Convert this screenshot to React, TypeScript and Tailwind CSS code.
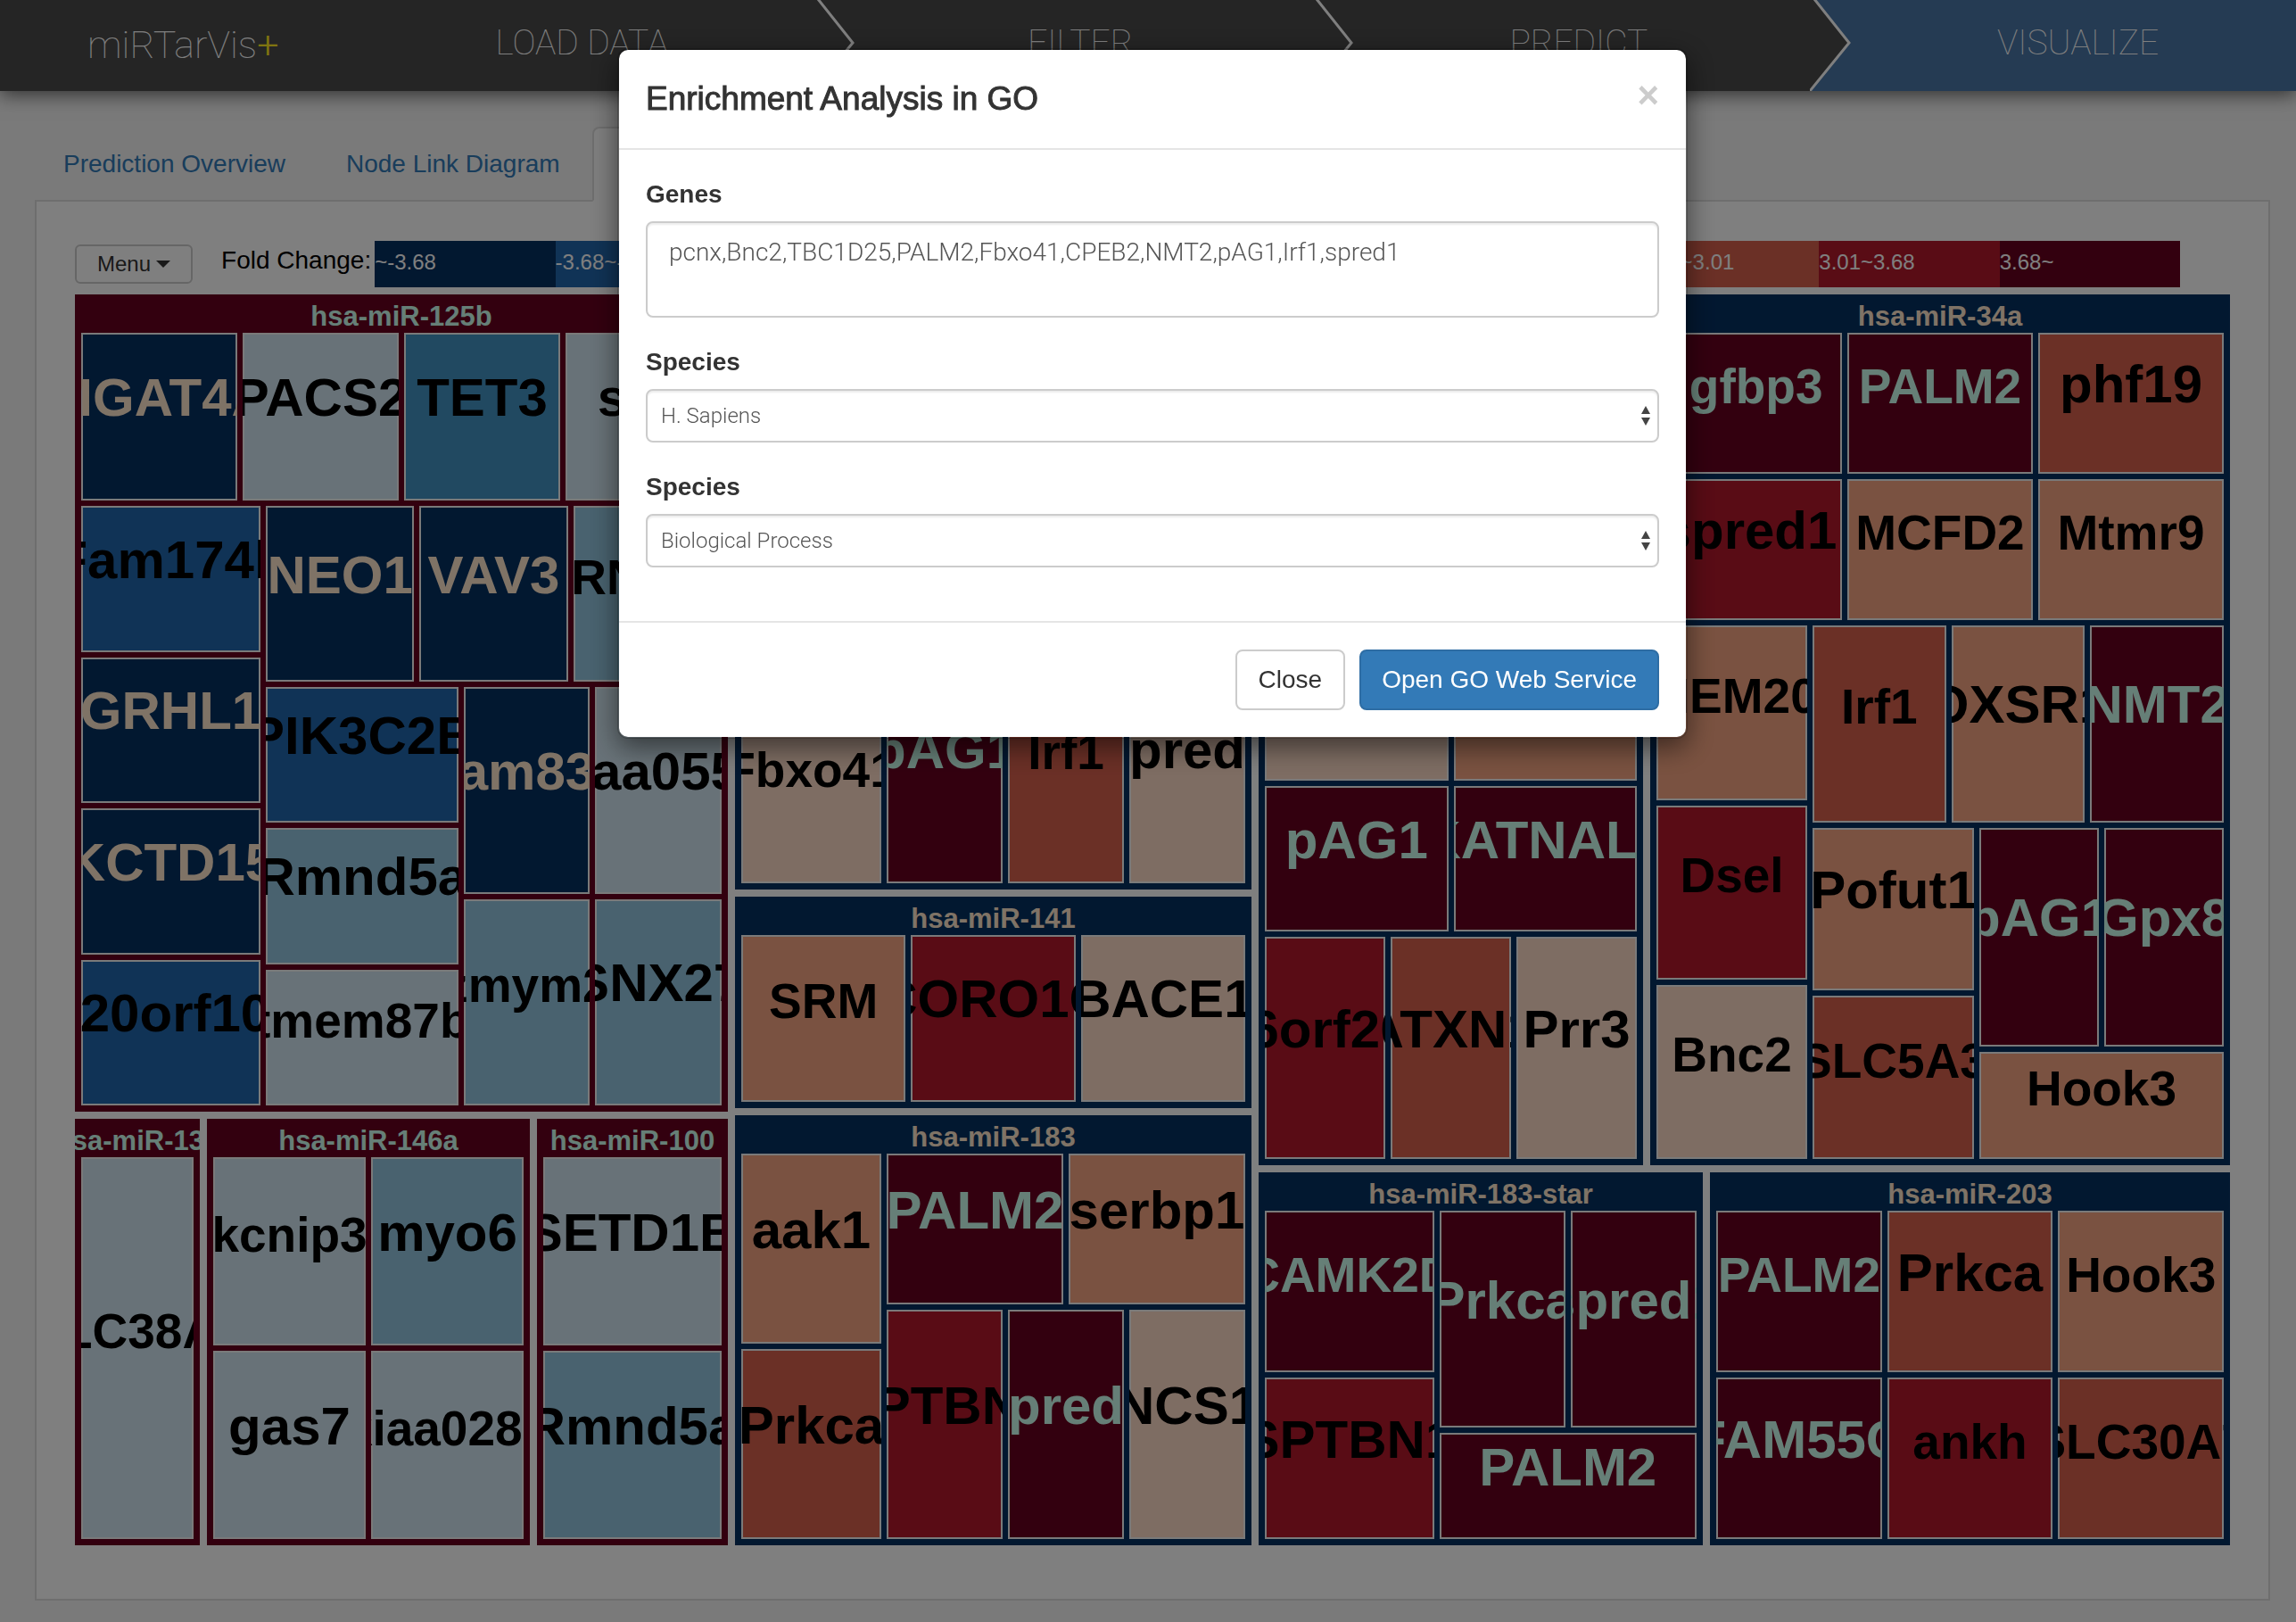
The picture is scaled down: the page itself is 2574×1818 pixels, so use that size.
import React from "react";

type Size = "lg" | "sm";

interface Gene {
  size: number;
  name: string;
  level: number;
  text: Size;
}

interface Split {
  size: number;
  dir: "row" | "col";
  items: Cell[];
}

type Cell = Gene | Split;

interface Group {
  size: number;
  title: string;
  tone: "up" | "down";
  content: Cell;
}

interface GroupSplit {
  size: number;
  dir: "row" | "col";
  groups: GroupCell[];
}

type GroupCell = Group | GroupSplit;

const levelColors = [
  "bg-[#053061]",
  "bg-[#2166ac]",
  "bg-[#4393c3]",
  "bg-[#92c5de]",
  "bg-[#d1e5f0]",
  "bg-[#fddbc7]",
  "bg-[#f4a582]",
  "bg-[#d6604d]",
  "bg-[#b2182b]",
  "bg-[#67001f]",
];

const levelLabels = [
  "~-3.68",
  "-3.68~-3.01",
  "-3.01~-2.34",
  "-2.34~-1.67",
  "-1.67~0",
  "0~1.67",
  "1.67~2.34",
  "2.34~3.01",
  "3.01~3.68",
  "3.68~",
];

const lg = (name: string, level: number, size = 1): Gene => ({ size, name, level, text: "lg" });
const sm = (name: string, level: number, size = 1): Gene => ({ size, name, level, text: "sm" });
const row = (size: number, ...items: Cell[]): Split => ({ size, dir: "row", items });
const col = (size: number, ...items: Cell[]): Split => ({ size, dir: "col", items });
const up = (size: number, title: string, content: Cell): Group => ({ size, title, tone: "up", content });
const down = (size: number, title: string, content: Cell): Group => ({ size, title, tone: "down", content });

const treemap: GroupSplit = {
  size: 1,
  dir: "row",
  groups: [
    {
      size: 732,
      dir: "col",
      groups: [
        up(
          916,
          "hsa-miR-125b",
          col(
            1,
            row(188, lg("MGAT4A", 0), lg("PACS2", 4), lg("TET3", 2), lg("sp1", 4)),
            row(
              672,
              col(201, lg("Fam174b", 1), lg("GRHL1", 0), lg("KCTD15", 0), lg("C20orf108", 1)),
              col(
                511,
                row(197, lg("NEO1", 0), lg("VAV3", 0), sm("RNF11", 3)),
                row(
                  469,
                  col(216, lg("PIK3C2B", 1), lg("Rmnd5a", 3), sm("tmem87b", 4)),
                  col(
                    290,
                    row(1, lg("Fam83h", 0), lg("kiaa0555", 4)),
                    row(1, sm("zmym2", 3), lg("SNX27", 3)),
                  ),
                ),
              ),
            ),
          ),
        ),
        {
          size: 478,
          dir: "row",
          groups: [
            up(140, "hsa-miR-132", sm("SLC38A2", 4)),
            up(
              362,
              "hsa-miR-146a",
              col(1, row(1, sm("kcnip3", 4), lg("myo6", 3)), row(1, lg("gas7", 4), sm("kiaa0286", 4))),
            ),
            up(214, "hsa-miR-100", col(1, lg("SETD1B", 4), lg("Rmnd5a", 3))),
          ],
        },
      ],
    },
    {
      size: 579,
      dir: "col",
      groups: [
        down(
          667,
          "hsa-miR-96",
          col(
            1,
            row(175, lg("pcnx", 6), lg("Bnc2", 5), lg("TBC1D25", 7)),
            row(
              437,
              col(157, lg("PALM2", 9), sm("Fbxo41", 5)),
              col(
                402,
                row(174, lg("CPEB2", 6), lg("NMT2", 9)),
                row(256, lg("pAG1", 9), sm("Irf1", 7), lg("spred1", 5)),
              ),
            ),
          ),
        ),
        down(238, "hsa-miR-141", row(1, sm("SRM", 6), lg("CORO1C", 8), lg("BACE1", 5))),
        down(
          482,
          "hsa-miR-183",
          row(
            1,
            col(157, lg("aak1", 6), lg("Prkca", 7)),
            col(
              402,
              row(169, lg("PALM2", 9), lg("serbp1", 6)),
              row(257, lg("SPTBN1", 8), lg("spred1", 9), lg("NCS1", 5)),
            ),
          ),
        ),
      ],
    },
    {
      size: 1089,
      dir: "col",
      groups: [
        {
          size: 976,
          dir: "row",
          groups: [
            down(
              431,
              "hsa-miR-182",
              col(
                1,
                row(163, lg("Prkca", 7), lg("PALM2", 9)),
                row(163, lg("Bnc2", 5), lg("spred1", 8)),
                row(163, sm("MCFD2", 5), sm("Mtmr9", 6)),
                row(163, lg("pAG1", 9), lg("KATNAL1", 9)),
                row(248, lg("C6orf201", 8), lg("ATXN1", 7), lg("Prr3", 5)),
              ),
            ),
            down(
              650,
              "hsa-miR-34a",
              col(
                1,
                row(158, sm("igfbp3", 9), sm("PALM2", 9), lg("phf19", 7)),
                row(158, lg("spred1", 8), sm("MCFD2", 6), sm("Mtmr9", 6)),
                row(
                  597,
                  col(169, sm("TMEM206", 6), sm("Dsel", 8), sm("Bnc2", 5)),
                  col(
                    461,
                    row(220, sm("Irf1", 7), lg("OXSR1", 6), lg("NMT2", 9)),
                    row(
                      371,
                      col(181, lg("Pofut1", 6), sm("SLC5A3", 7)),
                      col(274, row(245, lg("pAG1", 9), lg("Gpx8", 9)), sm("Hook3", 6, 120)),
                    ),
                  ),
                ),
              ),
            ),
          ],
        },
        {
          size: 418,
          dir: "row",
          groups: [
            down(
              498,
              "hsa-miR-183-star",
              row(
                1,
                col(190, sm("CAMK2D", 9), lg("SPTBN1", 8)),
                col(289, row(243, lg("Prkca", 9), lg("spred1", 9)), lg("PALM2", 9, 119)),
              ),
            ),
            down(
              583,
              "hsa-miR-203",
              col(
                1,
                row(1, sm("PALM2", 9), lg("Prkca", 7), sm("Hook3", 6)),
                row(1, lg("FAM55C", 9), sm("ankh", 8), sm("SLC30A7", 7)),
              ),
            ),
          ],
        },
      ],
    },
  ],
};

function geneTextColor(level: number) {
  if (level === 0) return "text-[#ffe6cc]";
  if (level === 9) return "text-[#ccffee]";
  return "text-black";
}

function CellView({ cell }: { cell: Cell }) {
  if ("items" in cell) {
    return (
      <div
        className={`flex min-h-0 min-w-0 basis-0 gap-[6px] ${cell.dir === "row" ? "flex-row" : "flex-col"}`}
        style={{ flexGrow: cell.size }}
      >
        {cell.items.map((item, i) => (
          <CellView key={i} cell={item} />
        ))}
      </div>
    );
  }
  return (
    <div
      className={`flex min-h-0 min-w-0 basis-0 items-center justify-center overflow-hidden font-bold whitespace-nowrap shadow-[inset_0_0_0_2px_#f4f4f4] ${levelColors[cell.level]} ${geneTextColor(cell.level)} ${cell.text === "lg" ? "text-[60px] leading-[60px]" : "text-[55px] leading-[56px]"}`}
      style={{ flexGrow: cell.size }}
    >
      <span className={cell.text === "lg" ? "pb-[42px]" : "pb-[38px]"}>{cell.name}</span>
    </div>
  );
}

function GroupView({ cell }: { cell: GroupCell }) {
  if ("groups" in cell) {
    return (
      <div
        className={`flex min-h-0 min-w-0 basis-0 gap-2 ${cell.dir === "row" ? "flex-row" : "flex-col"}`}
        style={{ flexGrow: cell.size }}
      >
        {cell.groups.map((g, i) => (
          <GroupView key={i} cell={g} />
        ))}
      </div>
    );
  }
  return (
    <section
      className={`flex min-h-0 min-w-0 basis-0 flex-col overflow-hidden ${cell.tone === "up" ? "bg-[#67001f] text-[#ccffee]" : "bg-[#053061] text-[#ffe6cc]"}`}
      style={{ flexGrow: cell.size }}
    >
      <h3 className="flex h-[43px] shrink-0 justify-center pt-2 text-[31px] leading-[34px] font-bold whitespace-nowrap">
        <span>{cell.title}</span>
      </h3>
      <div className="flex min-h-0 flex-1 px-[7px] pb-[7px]">
        <CellView cell={cell.content} />
      </div>
    </section>
  );
}

function Chevron({ active }: { active: boolean }) {
  return (
    <svg
      className="absolute top-0 -left-5 h-full w-[46px]"
      viewBox="0 0 46 102"
      preserveAspectRatio="none"
      aria-hidden="true"
    >
      <rect width="46" height="102" fill={active ? "#4a76a6" : "#4a4a4a"} />
      <path d="M0 0H5L45 48L0 102Z" fill="#4a4a4a" />
      <path d="M5 -1L44 48L0 102" fill="none" stroke="#fff" strokeWidth="3" />
    </svg>
  );
}

const steps = ["LOAD DATA", "FILTER", "PREDICT", "VISUALIZE"];

function TopBar() {
  return (
    <header className="relative flex h-[102px] bg-[#4a4a4a] font-[Roboto,'Liberation_Sans',sans-serif] font-thin text-white shadow-[0_4px_20px_rgba(0,0,0,0.6)]">
      <a href="#home" className="w-[373px] shrink-0 pt-3 pl-[98px] text-[43px] leading-[76px] whitespace-nowrap">
        miRTarVis<span className="font-light text-[#ffe820]">+</span>
      </a>
      <nav className="flex min-w-0 flex-1">
        {steps.map((step, i) => {
          const last = i === steps.length - 1;
          return (
            <a
              key={step}
              href={`#${step.toLowerCase().replace(" ", "-")}`}
              className={`relative flex min-w-0 basis-0 justify-center text-[39px] leading-[96px] whitespace-nowrap ${last ? "grow-[525] bg-[#4a76a6]" : "grow-[559]"}`}
            >
              {i > 0 && <Chevron active={last} />}
              <span className={last ? "pl-9" : ""}>{step}</span>
            </a>
          );
        })}
      </nav>
    </header>
  );
}

const tabs = ["Prediction Overview", "Node Link Diagram", "Treemap"];

function SelectField({ id, label, options }: { id: string; label: string; options: string[] }) {
  return (
    <div className="mb-[30px]">
      <label htmlFor={id} className="mb-[10px] block font-bold">
        {label}
      </label>
      <div className="relative">
        <select
          id={id}
          className="block h-[60px] w-full appearance-none rounded-[8px] border-2 border-[#ccc] bg-white px-[15px] font-[Roboto,'Liberation_Sans',sans-serif] text-[24px] font-light text-[#555] shadow-[inset_0_2px_2px_rgba(0,0,0,0.075)]"
        >
          {options.map((o) => (
            <option key={o}>{o}</option>
          ))}
        </select>
        <svg
          className="pointer-events-none absolute top-[19px] right-[10px] h-[22px] w-[10px]"
          viewBox="0 0 10 22"
          fill="#444"
          aria-hidden="true"
        >
          <path d="M5 0L10 9H0Z" />
          <path d="M0 13H10L5 22Z" />
        </svg>
      </div>
    </div>
  );
}

function EnrichmentDialog() {
  return (
    <div className="fixed inset-0 z-10 flex items-start justify-center bg-black/50 pt-[54px] pl-[10px]">
      <div
        role="dialog"
        aria-modal="true"
        aria-labelledby="dialog-title"
        className="w-full max-w-[1200px] rounded-[12px] border-2 border-black/20 bg-white bg-clip-padding text-[28px] leading-[40px] text-[#333] shadow-[0_10px_30px_rgba(0,0,0,0.5)]"
      >
        <div className="flex items-start justify-between border-b-2 border-[#e5e5e5] p-[30px]">
          <h4 id="dialog-title" className="text-[37px] leading-[50px] [-webkit-text-stroke:1px_#333]">
            Enrichment Analysis in GO
          </h4>
          <button type="button" aria-label="Close dialog" className="text-[42px] leading-[42px] font-bold text-[#ccc]">
            ×
          </button>
        </div>
        <form className="p-[30px]">
          <label htmlFor="genes" className="mb-[10px] block font-bold">
            Genes
          </label>
          <textarea
            id="genes"
            className="mb-[30px] block h-[108px] w-full resize-none rounded-[8px] border-2 border-[#ccc] px-6 py-[13px] font-[Roboto,'Liberation_Sans',sans-serif] font-light text-[#555] shadow-[inset_0_2px_2px_rgba(0,0,0,0.075)]"
            defaultValue="pcnx,Bnc2,TBC1D25,PALM2,Fbxo41,CPEB2,NMT2,pAG1,Irf1,spred1"
          />
          <SelectField id="species" label="Species" options={["H. Sapiens", "M. Musculus"]} />
          <SelectField
            id="ontology"
            label="Species"
            options={["Biological Process", "Molecular Function", "Cellular Component"]}
          />
        </form>
        <div className="flex justify-end gap-4 border-t-2 border-[#e5e5e5] p-[30px]">
          <button type="button" className="rounded-[8px] border-2 border-[#ccc] bg-white px-6 py-3">
            Close
          </button>
          <button
            type="button"
            className="rounded-[8px] border-2 border-[#2e6da4] bg-[#337ab7] px-[23px] py-3 text-white"
          >
            Open GO Web Service
          </button>
        </div>
      </div>
    </div>
  );
}

export default function App() {
  return (
    <div className="min-h-screen bg-[#f4f4f4] pb-6 font-['Liberation_Sans',Arial,sans-serif] text-[28px] leading-[40px]">
      <TopBar />
      <main className="mt-10 mr-[29px] ml-[39px]">
        <ul className="flex gap-1">
          {tabs.map((tab, i) => (
            <li key={tab}>
              <a
                href={`#tab-${i}`}
                className={`relative block rounded-t-[8px] border-2 px-[30px] py-5 ${i === 2 ? "z-[1] border-[#ddd] border-b-white bg-white text-[#555]" : "border-transparent text-[#337ab7]"}`}
              >
                {tab}
              </a>
            </li>
          ))}
        </ul>
        <div className="-mt-[2px] border-2 border-[#ddd] bg-white px-[43px] pt-11 pb-[60px]">
          <div className="mb-2 flex items-center pr-14">
            <button
              type="button"
              className="flex h-11 items-center gap-[6px] rounded-[6px] border-2 border-[#ccc] bg-white px-[23px] text-[24px] leading-[36px] text-[#333]"
            >
              Menu
              <svg className="h-2 w-4" viewBox="0 0 16 8" fill="#333" aria-hidden="true">
                <path d="M0 0H16L8 8Z" />
              </svg>
            </button>
            <span className="ml-8 self-start leading-[44px] whitespace-nowrap text-black">Fold Change:</span>
            <ol className="ml-1 flex h-[52px] min-w-0 flex-1 text-[24px] leading-[48px] text-white">
              {levelLabels.map((label, i) => (
                <li key={label} className={`min-w-0 flex-1 overflow-hidden whitespace-nowrap ${levelColors[i]}`}>
                  {label}
                </li>
              ))}
            </ol>
          </div>
          <div className="flex h-[1402px]">
            <GroupView cell={treemap} />
          </div>
        </div>
      </main>
      <EnrichmentDialog />
    </div>
  );
}
